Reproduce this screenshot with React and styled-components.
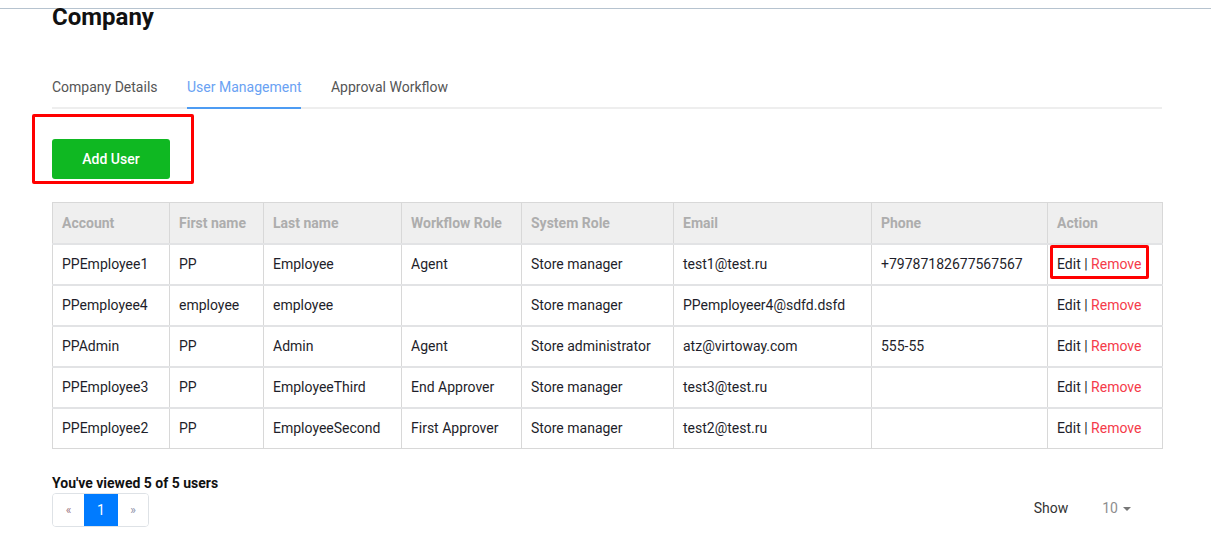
import React from "react";
import styled, { createGlobalStyle } from "styled-components";

const Global = createGlobalStyle`
  html, body { margin: 0; padding: 0; background: #fff; }
  body { font-family: Roboto, "Noto Sans", Arial, sans-serif; color: #212529; }
  * { box-sizing: border-box; }
`;

const TopBar = styled.div`
  height: 9px;
  border-bottom: 1px solid #b6c3cf;
`;

const Page = styled.main`
  padding: 0 49px 0 52px;
`;

const Title = styled.h1`
  margin: 0;
  font-size: 24px;
  line-height: 17px;
  font-weight: 700;
  color: #111;
`;

const Tabs = styled.nav`
  display: flex;
  gap: 29.5px;
  margin-top: 51px;
  border-bottom: 2px solid #eeeeee;
`;

const Tab = styled.div`
  font-size: 14px;
  line-height: 20px;
  padding-bottom: 10px;
  margin-bottom: -2px;
  color: ${(p) => (p.$active ? "#6aa2f3" : "#555")};
  border-bottom: 2px solid ${(p) => (p.$active ? "#4d9cf3" : "transparent")};
  cursor: pointer;
`;

const Highlight = styled.div`
  position: relative;
  display: inline-block;
  &::after {
    content: "";
    position: absolute;
    top: ${(p) => p.$t}px;
    bottom: ${(p) => p.$b}px;
    left: ${(p) => p.$l}px;
    right: ${(p) => p.$r}px;
    border: 3px solid #ff0000;
    border-radius: 2px;
    pointer-events: none;
  }
`;

const ButtonRow = styled.div`
  margin-top: 30px;
`;

const AddButton = styled.button`
  display: block;
  width: 118px;
  height: 40px;
  border: none;
  border-radius: 3px;
  background: #0fb822;
  color: #fff;
  font-family: Roboto, Arial, sans-serif;
  font-size: 14px;
  font-weight: 500;
  cursor: pointer;
`;

const Table = styled.table`
  margin-top: 23px;
  width: 1110px;
  table-layout: fixed;
  border-collapse: collapse;
  font-size: 14px;
`;

const Th = styled.th`
  height: 41px;
  padding: 0 10px 0 9px;
  text-align: left;
  font-weight: 700;
  color: #adadad;
  background: #efefef;
  border: 1px solid #d8d8d8;
  border-bottom: 2px solid #e2e3e5;
`;

const Td = styled.td`
  height: 41px;
  padding: 0 10px 0 9px;
  color: #1e1e2a;
  border-left: 1px solid #d8d8d8;
  border-right: 1px solid #d8d8d8;
  border-top: 2px solid #e2e3e5;
  border-bottom: 1px solid #d8d8d8;
  white-space: nowrap;
  line-height: 20px;
`;

const Remove = styled.span`
  color: #f53b4a;
  cursor: pointer;
`;

const Edit = styled.span`
  color: #1e1e2a;
  cursor: pointer;
`;

const Footer = styled.div`
  display: flex;
  justify-content: space-between;
  align-items: flex-end;
  margin-top: 26px;
`;

const Summary = styled.div`
  font-size: 14px;
  line-height: 16px;
  font-weight: 700;
  color: #111;
  margin-bottom: 2px;
`;

const Pager = styled.div`
  display: inline-flex;
  height: 34px;
  border: 1px solid #dee2e6;
  border-radius: 4px;
  overflow: hidden;
`;

const PageItem = styled.div`
  width: ${(p) => p.$w}px;
  display: flex;
  align-items: center;
  justify-content: center;
  font-size: ${(p) => (p.$active ? 14 : 12)}px;
  background: ${(p) => (p.$active ? "#007bff" : "#fff")};
  color: ${(p) => (p.$active ? "#fff" : p.$color)};
  cursor: pointer;
`;

const ShowBlock = styled.div`
  display: flex;
  align-items: center;
  font-size: 14px;
  line-height: 20px;
  margin-bottom: 9px;
  padding-right: 31px;
`;

const ShowLabel = styled.span`
  color: #333;
  margin-right: 34px;
`;

const PerPage = styled.span`
  color: #8e8e8e;
  display: inline-flex;
  align-items: center;
  gap: 5px;
`;

const Caret = styled.span`
  width: 0;
  height: 0;
  border-left: 4px solid transparent;
  border-right: 4px solid transparent;
  border-top: 4px solid #777;
  margin-top: 1px;
`;

const cols = [117, 94, 138, 120, 152, 198, 176, 115];
const headers = ["Account", "First name", "Last name", "Workflow Role", "System Role", "Email", "Phone", "Action"];
const rows = [
  ["PPEmployee1", "PP", "Employee", "Agent", "Store manager", "test1@test.ru", "+79787182677567567"],
  ["PPemployee4", "employee", "employee", "", "Store manager", "PPemployeer4@sdfd.dsfd", ""],
  ["PPAdmin", "PP", "Admin", "Agent", "Store administrator", "atz@virtoway.com", "555-55"],
  ["PPEmployee3", "PP", "EmployeeThird", "End Approver", "Store manager", "test3@test.ru", ""],
  ["PPEmployee2", "PP", "EmployeeSecond", "First Approver", "Store manager", "test2@test.ru", ""],
];

function ActionLinks() {
  return (
    <>
      <Edit>Edit</Edit> | <Remove>Remove</Remove>
    </>
  );
}

export default function App() {
  return (
    <>
      <Global />
      <TopBar />
      <Page>
        <Title>Company</Title>
        <Tabs>
          <Tab>Company Details</Tab>
          <Tab $active>User Management</Tab>
          <Tab>Approval Workflow</Tab>
        </Tabs>
        <ButtonRow>
          <Highlight $t={-25} $b={-5} $l={-20} $r={-24}>
            <AddButton>Add User</AddButton>
          </Highlight>
        </ButtonRow>
        <Table>
          <colgroup>
            {cols.map((w, i) => (
              <col key={i} style={{ width: w }} />
            ))}
          </colgroup>
          <thead>
            <tr>
              {headers.map((h) => (
                <Th key={h}>{h}</Th>
              ))}
            </tr>
          </thead>
          <tbody>
            {rows.map((r, i) => (
              <tr key={i}>
                {r.map((c, j) => (
                  <Td key={j}>{c}</Td>
                ))}
                <Td>
                  {i === 0 ? (
                    <Highlight $t={-9} $b={-5} $l={-7} $r={-8}>
                      <ActionLinks />
                    </Highlight>
                  ) : (
                    <ActionLinks />
                  )}
                </Td>
              </tr>
            ))}
          </tbody>
        </Table>
        <Footer>
          <div>
            <Summary>You've viewed 5 of 5 users</Summary>
            <Pager>
              <PageItem $w={31} $color="#a07a86">«</PageItem>
              <PageItem $w={34} $active>1</PageItem>
              <PageItem $w={30} $color="#8a8fa8">»</PageItem>
            </Pager>
          </div>
          <ShowBlock>
            <ShowLabel>Show</ShowLabel>
            <PerPage>
              10
              <Caret />
            </PerPage>
          </ShowBlock>
        </Footer>
      </Page>
    </>
  );
}
